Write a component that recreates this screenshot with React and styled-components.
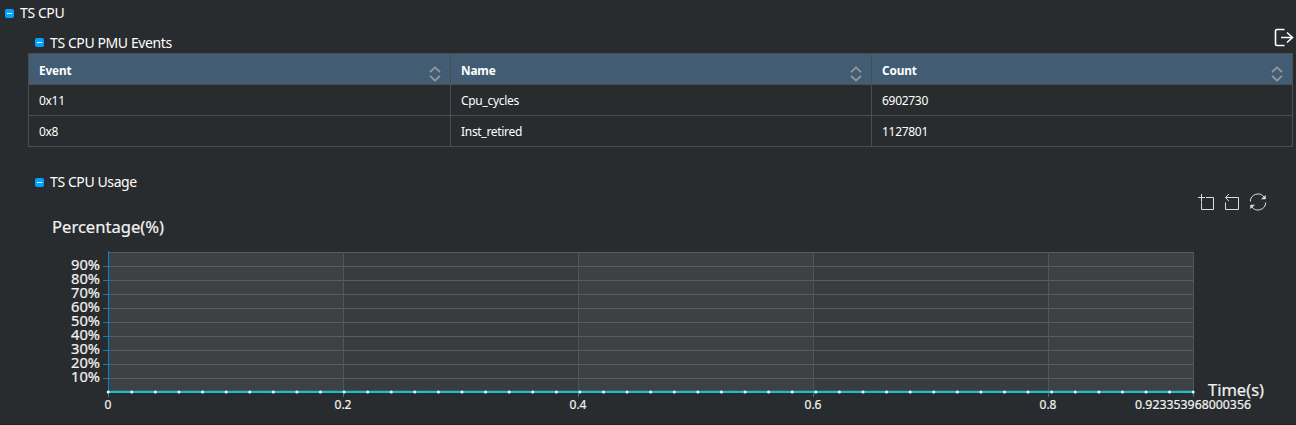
import React from "react";
import styled, { createGlobalStyle } from "styled-components";

const GlobalStyle = createGlobalStyle`
  * { box-sizing: border-box; }
  body {
    margin: 0;
    background: #292c2e;
    color: #fff;
    font-family: "Noto Sans", "Open Sans", sans-serif;
    overflow: hidden;
  }
`;

const Page = styled.main`
  width: 1296px;
  height: 425px;
  overflow: hidden;
  background: #292c2e;
  border-bottom: 1px solid #242528;
`;

const Heading = styled.div`
  display: flex;
  align-items: center;
  gap: 6px;
  height: ${(p) => p.$height}px;
  padding-left: ${(p) => (p.$nested ? 35 : 5)}px;
  font-size: 14px;
  line-height: 20px;
  white-space: nowrap;
`;

const HeadingText = styled.span`
  letter-spacing: ${(p) => p.$spacing || 0}px;
`;

const Toggle = styled.span`
  display: flex;
  align-items: center;
  justify-content: center;
  width: 9px;
  height: 9px;
  border-radius: 2px;
  background: #00a5ff;
  &::after {
    content: "";
    width: 5px;
    height: 1px;
    background: #fff;
  }
`;

const TitleRow = styled.div`
  display: flex;
  justify-content: space-between;
  height: 27px;
  padding-right: 2px;
`;

const ExportButton = styled.span`
  display: flex;
  padding-top: 2px;
`;

const Table = styled.table`
  width: 1265px;
  margin-left: 28px;
  border-collapse: collapse;
  table-layout: fixed;
  font-size: 12px;
`;

const Cell = styled.td`
  height: 31px;
  padding: 2px 0 0 10px;
  border: 1px solid #4b4d4f;
  line-height: 20px;
  letter-spacing: ${(p) => p.$spacing || 0}px;
`;

const HeadCell = styled(Cell).attrs({ as: "th" })`
  padding-top: 1px;
  background: #425c73;
  text-align: left;
  font-weight: 700;
  font-size: 11.8px;
  letter-spacing: -0.15px;
`;

const HeadInner = styled.div`
  display: flex;
  align-items: center;
  justify-content: space-between;
  height: 28px;
  padding-right: 9px;
  svg { margin-top: 9px; }
`;

const UsageSection = styled.section`
  padding-top: 26px;
`;

const Toolbar = styled.div`
  display: flex;
  justify-content: flex-end;
  height: 22px;
  padding: 1px 26px 0 0;
`;

const Chart = styled.svg`
  display: block;
  font-family: "Noto Sans", "Open Sans", sans-serif;
  fill: #f2f2f2;
`;

const AxisLabel = styled.text`
  stroke: #f2f2f2;
  stroke-width: 0.2px;
`;

const SortIcon = () => (
  <svg width="12" height="16" viewBox="0 0 12 16" fill="none" stroke="#999" strokeWidth="1.8">
    <path d="M1 6.2 6 1.4 11 6.2M1 9.8l5 4.8L11 9.8" />
  </svg>
);

const ExportIcon = () => (
  <svg width="20" height="19" viewBox="0 0 20 19" fill="none" stroke="#fff" strokeWidth="1.6">
    <path d="M10.5 1.5H3Q1.5 1.5 1.5 3V16Q1.5 17.5 3 17.5H10.5M7 9.5H18.5M13 4.5 18.5 9.5 13 14.5" />
  </svg>
);

const ChartTools = () => (
  <svg width="74" height="20" viewBox="1196 192 74 20" fill="none" stroke="#ddd">
    <path d="M1201.5 194v8M1198 197.5h7M1206 197.5h7.5v12h-12v-7" />
    <path d="M1226 197.5h12.5v12h-13v-7M1229 194l-3.6 3.6 3.6 3.6" />
    <path d="M1250.3 201.5a7.7 7.7 0 0 1 14-4.2M1265.7 202.5a7.7 7.7 0 0 1-14 4.2" />
    <path d="M1265.5 195.5v3.5h-4zM1250.5 208.5v-3.5h4z" fill="#ddd" strokeWidth=".5" />
  </svg>
);

const columns = [
  { title: "Event", width: 422 },
  { title: "Name", width: 421 },
  { title: "Count", width: 421 },
];
const rows = [
  ["0x11", "Cpu_cycles", "6902730"],
  ["0x8", "Inst_retired", "1127801"],
];

const LEFT = 108;
const RIGHT = 1193;
const xTicks = [108, 343, 578, 813, 1048, 1193];
const yTicks = [90, 80, 70, 60, 50, 40, 30, 20, 10];
const samples = Array.from({ length: 47 }, (_, i) => LEFT + (i * (RIGHT - LEFT)) / 46);
const tickY = (v) => 392 - v * 1.4;

const UsageChart = () => (
  <Chart width="1296" height="209" viewBox="0 213 1296 209">
    <AxisLabel x="52" y="233" fontSize="16.6" textLength="112" lengthAdjust="spacingAndGlyphs">Percentage(%)</AxisLabel>
    {xTicks.slice(0, -1).map((x, i) => (
      <rect key={x} x={x} y="252" width={xTicks[i + 1] - x} height="140" fill={i % 2 ? "#393c3e" : "#3e4143"} />
    ))}
    <g shapeRendering="crispEdges">
      {[100, ...yTicks].map((v) => (
        <rect key={v} x={LEFT} y={Math.round(tickY(v))} width={RIGHT - LEFT + 1} height="1" fill="#5a5d5f" />
      ))}
      {xTicks.slice(1).map((x) => (
        <rect key={x} x={x} y="252" width="1" height="140" fill="#525557" />
      ))}
      {xTicks.map((x) => (
        <rect key={x} x={x} y="392" width="1" height="5" fill="#087fc0" />
      ))}
      {yTicks.map((v) => (
        <rect key={v} x="103" y={Math.round(tickY(v))} width="5" height="1" fill="#087fc0" />
      ))}
      <rect x="108" y="251" width="1" height="146" fill="#0088cf" />
    </g>
    <path d="M108 391.9H1193" stroke="#1fbdcb" strokeWidth="2.3" />
    {samples.map((x) => (
      <circle key={x} cx={x + 0.2} cy="391.9" r="1.5" fill="#e3ffff" />
    ))}
    {yTicks.map((v) => (
      <AxisLabel key={v} x="71" y={tickY(v) + 4} fontSize="14" textLength="29" lengthAdjust="spacingAndGlyphs">{v}%</AxisLabel>
    ))}
    <g fontSize="12" textAnchor="middle">
      <AxisLabel x="108" y="409">0</AxisLabel>
      <AxisLabel x="343" y="409">0.2</AxisLabel>
      <AxisLabel x="578" y="409">0.4</AxisLabel>
      <AxisLabel x="813" y="409">0.6</AxisLabel>
      <AxisLabel x="1048" y="409">0.8</AxisLabel>
      <AxisLabel x="1193" y="409" textLength="116" lengthAdjust="spacingAndGlyphs">0.923353968000356</AxisLabel>
    </g>
    <AxisLabel x="1208" y="396" fontSize="16.6" textLength="56" lengthAdjust="spacingAndGlyphs">Time(s)</AxisLabel>
  </Chart>
);

export default function App() {
  return (
    <Page>
      <GlobalStyle />
      <Heading $height={26}><Toggle /><HeadingText $spacing={-0.4}>TS CPU</HeadingText></Heading>
      <TitleRow>
        <Heading $nested $height={33}><Toggle /><HeadingText $spacing={-0.4}>TS CPU PMU Events</HeadingText></Heading>
        <ExportButton><ExportIcon /></ExportButton>
      </TitleRow>
      <Table>
        <colgroup>{columns.map((c) => <col key={c.title} style={{ width: c.width }} />)}</colgroup>
        <thead>
          <tr>
            {columns.map((c) => (
              <HeadCell key={c.title}><HeadInner>{c.title}<SortIcon /></HeadInner></HeadCell>
            ))}
          </tr>
        </thead>
        <tbody>
          {rows.map((row) => (
            <tr key={row[0]}>{row.map((value) => <Cell key={value} $spacing={-0.3}>{value}</Cell>)}</tr>
          ))}
        </tbody>
      </Table>
      <UsageSection>
        <Heading $nested $height={18}><Toggle /><HeadingText $spacing={-0.4}>TS CPU Usage</HeadingText></Heading>
        <Toolbar><ChartTools /></Toolbar>
        <UsageChart />
      </UsageSection>
    </Page>
  );
}
